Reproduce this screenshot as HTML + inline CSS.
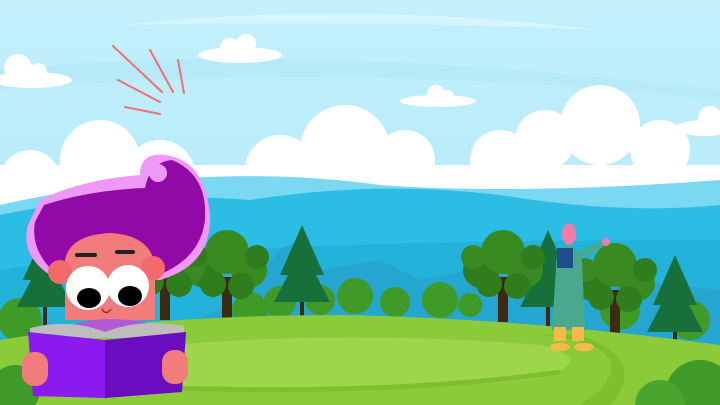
<!DOCTYPE html>
<html><head><meta charset="utf-8"><style>
html,body{margin:0;padding:0;width:720px;height:405px;overflow:hidden;background:#bfeefb}
svg{display:block;position:absolute;left:0;top:0}
</style></head><body>
<svg width="720" height="405" viewBox="0 0 720 405" xmlns="http://www.w3.org/2000/svg">
<defs>
<linearGradient id="sky" x1="0" y1="0" x2="0" y2="1"><stop offset="0" stop-color="#c4f0fc"/><stop offset="1" stop-color="#a9e6f8"/></linearGradient>
<g id="tree"><rect x="-5" y="-5" width="10" height="45" fill="#3d2a12"/>
<circle cx="-22" cy="-12" r="18" fill="#2f7d1c"/><circle cx="22" cy="-12" r="18" fill="#3a8a22"/><circle cx="0" cy="-30" r="22" fill="#3a8a22"/><circle cx="-14" cy="2" r="13" fill="#2f7d1c"/><circle cx="14" cy="4" r="13" fill="#2f7d1c"/><circle cx="-30" cy="-25" r="12" fill="#3a8a22"/><circle cx="30" cy="-25" r="12" fill="#2f7d1c"/></g>
<g id="pine"><rect x="-2" y="0" width="4" height="22" fill="#3d2a12"/><polygon points="0,-75 -22,-25 -14,-25 -28,2 28,2 14,-25 22,-25" fill="#17703a"/></g>
</defs>
<rect width="720" height="405" fill="url(#sky)"/>
<path d="M120 25 Q350 0 600 30 Q400 20 120 25Z" fill="#d6f6fd"/>
<path d="M0 70 Q300 40 720 90 L720 100 Q350 60 0 90Z" fill="#b4e8f7" opacity=".7"/>
<g fill="#fff">
<ellipse cx="240" cy="55" rx="42" ry="8"/><circle cx="230" cy="48" r="10"/><circle cx="246" cy="44" r="10"/>
<ellipse cx="32" cy="80" rx="40" ry="8"/><circle cx="18" cy="68" r="14"/><circle cx="38" cy="72" r="9"/>
<ellipse cx="438" cy="101" rx="38" ry="6"/><circle cx="436" cy="94" r="9"/><circle cx="448" cy="96" r="6"/>
<ellipse cx="705" cy="128" rx="30" ry="8"/><circle cx="710" cy="118" r="12"/>
<circle cx="345" cy="150" r="45"/><circle cx="405" cy="160" r="30"/><circle cx="280" cy="170" r="35"/>
<circle cx="545" cy="140" r="30"/><circle cx="600" cy="125" r="40"/><circle cx="660" cy="150" r="30"/><circle cx="500" cy="160" r="30"/>
<circle cx="100" cy="160" r="40"/><circle cx="160" cy="175" r="35"/><circle cx="30" cy="180" r="30"/>
<rect x="0" y="165" width="720" height="40"/>
</g>
<path d="M0 205 Q200 160 380 185 Q520 195 720 180 L720 405 L0 405Z" fill="#7bd8f2"/>
<path d="M0 215 Q120 190 250 200 Q380 180 500 195 Q620 215 720 205 L720 405 L0 405Z" fill="#2cbde4"/>
<path d="M0 270 Q200 240 720 240 L720 405 L0 405Z" fill="#22b2da"/>
<path d="M240 300 L280 250 L300 240 L320 270 L380 260 L420 280 L470 270 L520 270 L720 290 L720 405 L0 405Z" fill="#24a6d0"/>
<g fill="#3f9a27">
<circle cx="250" cy="310" r="18"/><circle cx="280" cy="302" r="16"/><circle cx="320" cy="300" r="15"/><circle cx="355" cy="296" r="18"/><circle cx="395" cy="302" r="15"/><circle cx="440" cy="300" r="18"/><circle cx="470" cy="305" r="12"/>
<circle cx="20" cy="320" r="22"/><circle cx="620" cy="310" r="20"/><circle cx="690" cy="320" r="20"/>
</g>
<use href="#pine" x="45" y="305"/>
<use href="#pine" x="302" y="300"/>
<use href="#pine" x="548" y="305"/>
<use href="#pine" x="675" y="330"/>
<use href="#tree" x="227" y="282"/>
<use href="#tree" x="165" y="280"/>
<use href="#tree" x="503" y="282"/>
<use href="#tree" x="615" y="295"/>
<path d="M0 340 Q150 315 340 315 Q520 318 720 345 L720 405 L0 405Z" fill="#8bcb3a"/>
<path d="M170 345 Q350 330 540 345 Q600 360 540 378 Q400 395 180 388 Q170 365 170 345Z" fill="#9dd64a"/>
<path d="M540 335 Q640 345 600 390 L580 405 L610 405 Q650 360 580 335Z" fill="#7fbf2e"/>
<path d="M170 388 Q400 395 560 372" stroke="#7fbf2e" stroke-width="5" fill="none"/>
<circle cx="700" cy="395" r="35" fill="#3f9a27"/><circle cx="660" cy="405" r="25" fill="#4aa52e"/>
<circle cx="15" cy="390" r="25" fill="#3f9a27"/>
<g>
<path d="M556 268 Q555 250 568 245 Q580 248 582 262 L585 330 L552 330Z" fill="#4aa88c"/>
<path d="M580 255 L600 245" stroke="#4aa88c" stroke-width="6" stroke-linecap="round"/>
<circle cx="606" cy="242" r="4" fill="#f07cae"/>
<ellipse cx="569" cy="234" rx="7" ry="11" fill="#f07cae"/>
<rect x="557" y="248" width="16" height="20" fill="#1d4f8e"/>
<rect x="554" y="327" width="12" height="14" fill="#f7b948"/><rect x="572" y="327" width="12" height="14" fill="#f7b948"/>
<ellipse cx="560" cy="347" rx="10" ry="4" fill="#f7b948"/><ellipse cx="584" cy="347" rx="10" ry="4" fill="#f7b948"/>
</g>
<g stroke="#f07070" stroke-width="2" stroke-linecap="round">
<line x1="113" y1="46" x2="162" y2="92"/><line x1="150" y1="50" x2="173" y2="92"/><line x1="178" y1="60" x2="184" y2="93"/><line x1="118" y1="80" x2="160" y2="102"/><line x1="125" y1="107" x2="160" y2="114"/>
</g>
<g>
<path d="M40 200 Q80 180 140 175 Q140 152 165 155 Q205 160 210 215 Q212 265 160 280 L50 275 Q20 255 28 225Z" fill="#ef98f8"/>
<path d="M44 205 Q90 190 145 188 Q150 162 172 160 Q208 175 205 220 Q200 262 150 278 L55 273 Q30 250 35 222Z" fill="#910aa8"/>
<circle cx="158" cy="173" r="9" fill="#ef98f8"/>
<path d="M65 260 Q70 235 110 233 Q150 235 155 265 L155 320 L65 320Z" fill="#f27b7b"/>
<circle cx="60" cy="272" r="12" fill="#f26a6a"/><circle cx="153" cy="268" r="12" fill="#f26a6a"/>
<rect x="75" y="253" width="22" height="4" rx="2" fill="#222"/><rect x="115" y="250" width="20" height="4" rx="2" fill="#222"/>
<circle cx="88" cy="288" r="22" fill="#fff"/><circle cx="128" cy="286" r="21" fill="#fff"/>
<ellipse cx="89" cy="298" rx="12" ry="10" fill="#000"/><ellipse cx="130" cy="296" rx="12" ry="10" fill="#000"/>
<path d="M102 309 Q106 316 111 309" stroke="#b02020" stroke-width="1.5" fill="none"/>
<path d="M72 325 Q100 315 145 322 L145 335 L72 335Z" fill="#b15ad6"/>
<path d="M30 328 Q70 318 105 332 Q140 318 184 326 L184 338 L30 338Z" fill="#bdbdbd"/>
<path d="M28 332 L105 340 L105 398 L33 396Z" fill="#8a1aee"/>
<path d="M105 340 L186 332 L182 392 L105 398Z" fill="#6a0cc0"/>
<rect x="22" y="352" width="26" height="34" rx="12" fill="#f27b7b"/>
<rect x="162" y="350" width="26" height="34" rx="12" fill="#f27b7b"/>
</g>
</svg>
</body></html>
